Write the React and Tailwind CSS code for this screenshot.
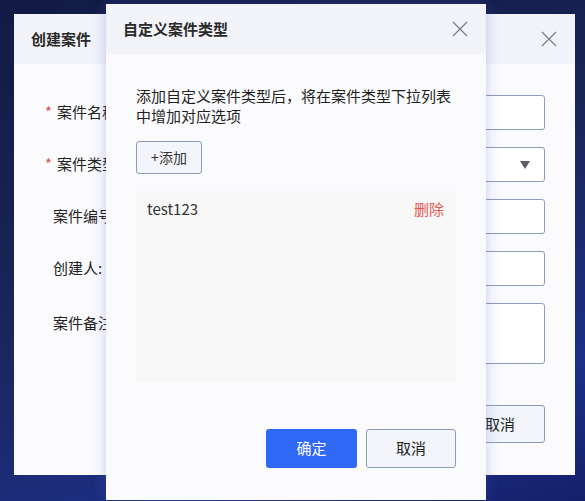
import React from 'react';

const font = { fontFamily: '"Noto Sans CJK SC", "Noto Sans", sans-serif' };

function CloseIcon({ className }) {
  return (
    <svg viewBox="0 0 16 16" className={className} fill="none" stroke="currentColor" strokeWidth="1.3">
      <path d="M1 1L15 15M15 1L1 15" />
    </svg>
  );
}

function FormRow({ label, required, children, tall }) {
  return (
    <div className={`flex ${tall ? 'h-[61px] items-start pt-[9px]' : 'h-[35px] items-center'}`}>
      <div className={`w-[120px] shrink-0 text-[15px] text-[#222] ${required ? 'pl-0' : 'pl-[8px]'}`}>
        {required && <span className="text-[#e0534f] mr-[5px]">*</span>}
        {label}
      </div>
      {children}
    </div>
  );
}

function BackModal() {
  return (
    <div className="absolute left-[14px] top-[14px] w-[561px] h-[461px] bg-[#fbfbfe] flex flex-col">
      <div className="h-[50px] bg-[#f3f4fa] flex items-center justify-between pl-[17px] pr-[18px]">
        <span className="text-[15px] font-bold text-[#2a2a2a]">创建案件</span>
        <CloseIcon className="w-[16px] h-[16px] text-[#7d7f85]" />
      </div>
      <div className="flex flex-col gap-[17px] pl-[31px] pr-[30px] pt-[31px]">
        <FormRow label="案件名称" required>
          <div className="flex-1 h-full bg-white border border-[#8e9cbb] rounded-[3px]" />
        </FormRow>
        <FormRow label="案件类型" required>
          <div className="flex-1 h-full bg-white border border-[#8e9cbb] rounded-[3px] flex items-center justify-end pr-[14px]">
            <svg viewBox="0 0 10 8" className="w-[10px] h-[8px] text-[#5a5d66]" fill="currentColor">
              <path d="M0 0H10L5 8Z" />
            </svg>
          </div>
        </FormRow>
        <FormRow label="案件编号">
          <div className="flex-1 h-full bg-white border border-[#8e9cbb] rounded-[3px]" />
        </FormRow>
        <FormRow label="创建人:">
          <div className="flex-1 h-full bg-white border border-[#8e9cbb] rounded-[3px]" />
        </FormRow>
        <FormRow label="案件备注" tall>
          <div className="flex-1 h-[61px] -mt-[9px] bg-white border border-[#8e9cbb] rounded-[3px]" />
        </FormRow>
        <div className="flex justify-end mt-[24px]">
          <button className="w-[90px] h-[38px] border border-[#8e9cbb] rounded-[3px] bg-[#f3f5fa] text-[15px] text-[#222]">
            取消
          </button>
        </div>
      </div>
    </div>
  );
}

function FrontModal() {
  return (
    <div className="absolute left-[106px] top-[4px] w-[380px] h-[496px] bg-[#fbfbfe] flex flex-col shadow-[0_0_14px_rgba(70,90,200,0.3)]">
      <div className="h-[50px] bg-[#f3f4fa] flex items-center justify-between pl-[17px] pr-[18px]">
        <span className="text-[15px] font-bold text-[#2a2a2a]">自定义案件类型</span>
        <CloseIcon className="w-[16px] h-[16px] text-[#7d7f85]" />
      </div>
      <div className="flex flex-col px-[30px] pt-[32px]">
        <p className="text-[15px] leading-[20px] text-[#1f1f1f]">
          添加自定义案件类型后，将在案件类型下拉列表中增加对应选项
        </p>
        <button className="mt-[15px] w-[66px] h-[33px] border border-[#8e9cbb] rounded-[3px] bg-[#f3f5fa] text-[14px] text-[#333]">
          +添加
        </button>
        <div className="mt-[17px] h-[191px] bg-[#f8f8f9] px-[11px] pt-[7px]">
          <div className="flex items-center justify-between">
            <span className="text-[15px] text-[#333]">test123</span>
            <span className="text-[15px] text-[#e6574f] mr-[1px]">删除</span>
          </div>
        </div>
        <div className="mt-[47px] flex justify-end gap-[9px]">
          <button className="w-[91px] h-[39px] rounded-[3px] bg-[#2f68f5] text-[15px] text-white">确定</button>
          <button className="w-[90px] h-[39px] border border-[#8e9cbb] rounded-[3px] bg-[#f3f5fa] text-[15px] text-[#222]">
            取消
          </button>
        </div>
      </div>
    </div>
  );
}

export default function App() {
  return (
    <div
      className="relative w-[585px] h-[501px] overflow-hidden bg-[linear-gradient(160deg,#121a45_0%,#1a2558_45%,#1d2f86_80%,#14206a_100%)]"
      style={font}
    >
      <BackModal />
      <FrontModal />
    </div>
  );
}
